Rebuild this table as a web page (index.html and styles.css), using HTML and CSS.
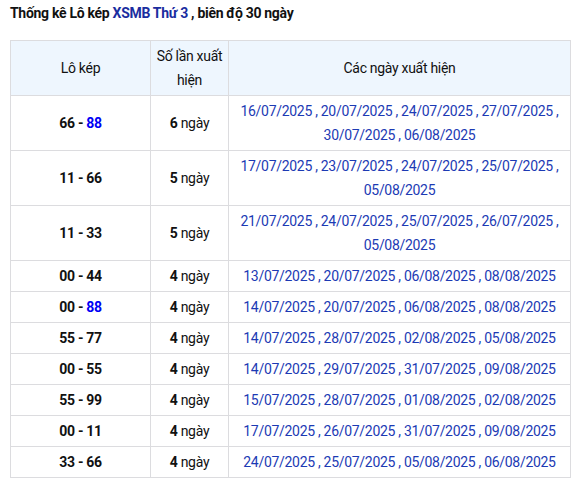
FILE: index.html
```html
<!DOCTYPE html>
<html lang="vi">
<head>
<meta charset="utf-8">
<link rel="stylesheet" href="styles.css">
</head>
<body>
<div class="page">
  <h2 class="title">Thống kê Lô kép <a class="link">XSMB Thứ 3</a> , biên độ 30 ngày</h2>
  <table class="stats">
    <colgroup><col class="c1"><col class="c2"><col class="c3"></colgroup>
    <thead>
      <tr><th>Lô kép</th><th>Số lần xuất hiện</th><th>Các ngày xuất hiện</th></tr>
    </thead>
    <tbody>
      <tr class="tall"><td class="pair">66 - <span class="hl">88</span></td><td><b>6</b> ngày</td><td class="dates">16/07/2025&nbsp;, 20/07/2025&nbsp;, 24/07/2025&nbsp;, 27/07/2025&nbsp;, 30/07/2025&nbsp;, 06/08/2025</td></tr>
      <tr class="tall"><td class="pair">11 - 66</td><td><b>5</b> ngày</td><td class="dates">17/07/2025&nbsp;, 23/07/2025&nbsp;, 24/07/2025&nbsp;, 25/07/2025&nbsp;, 05/08/2025</td></tr>
      <tr class="tall"><td class="pair">11 - 33</td><td><b>5</b> ngày</td><td class="dates">21/07/2025&nbsp;, 24/07/2025&nbsp;, 25/07/2025&nbsp;, 26/07/2025&nbsp;, 05/08/2025</td></tr>
      <tr><td class="pair">00 - 44</td><td><b>4</b> ngày</td><td class="dates">13/07/2025&nbsp;, 20/07/2025&nbsp;, 06/08/2025&nbsp;, 08/08/2025</td></tr>
      <tr><td class="pair">00 - <span class="hl">88</span></td><td><b>4</b> ngày</td><td class="dates">14/07/2025&nbsp;, 20/07/2025&nbsp;, 06/08/2025&nbsp;, 08/08/2025</td></tr>
      <tr><td class="pair">55 - 77</td><td><b>4</b> ngày</td><td class="dates">14/07/2025&nbsp;, 28/07/2025&nbsp;, 02/08/2025&nbsp;, 05/08/2025</td></tr>
      <tr><td class="pair">00 - 55</td><td><b>4</b> ngày</td><td class="dates">14/07/2025&nbsp;, 29/07/2025&nbsp;, 31/07/2025&nbsp;, 09/08/2025</td></tr>
      <tr><td class="pair">55 - 99</td><td><b>4</b> ngày</td><td class="dates">15/07/2025&nbsp;, 28/07/2025&nbsp;, 01/08/2025&nbsp;, 02/08/2025</td></tr>
      <tr><td class="pair">00 - 11</td><td><b>4</b> ngày</td><td class="dates">17/07/2025&nbsp;, 26/07/2025&nbsp;, 31/07/2025&nbsp;, 09/08/2025</td></tr>
      <tr><td class="pair">33 - 66</td><td><b>4</b> ngày</td><td class="dates">24/07/2025&nbsp;, 25/07/2025&nbsp;, 05/08/2025&nbsp;, 06/08/2025</td></tr>
    </tbody>
  </table>
</div>
</body>
</html>
```
FILE: styles.css
```css
html, body { margin: 0; padding: 0; background: #fff; }
body { font-family: Roboto, "Noto Sans", sans-serif; font-size: 14px; color: #111; letter-spacing: -0.3px; }
.page { padding: 3px 10px 0 10px; }
.title { margin: 0 0 17px 0; font-size: 14px; font-weight: 700; line-height: 20px; color: #111; }
.link { color: #1b2d9f; text-decoration: none; }
.stats { width: 560px; border-collapse: collapse; table-layout: fixed; }
.c1 { width: 140px; }
.c2 { width: 78px; }
.c3 { width: 342px; }
.stats th, .stats td { border: 1px solid #dcdcdf; text-align: center; vertical-align: middle; line-height: 24px; padding: 3px 4px; }
.stats th { background: #eef6fe; font-weight: 400; height: 48px; color: #111; }
.stats td { height: 24px; }
.stats td.dates { color: #1c3ab4; }
.stats td.pair { font-weight: 700; }
.hl { color: #0000f5; }
.tall td { height: 48px; }
```
